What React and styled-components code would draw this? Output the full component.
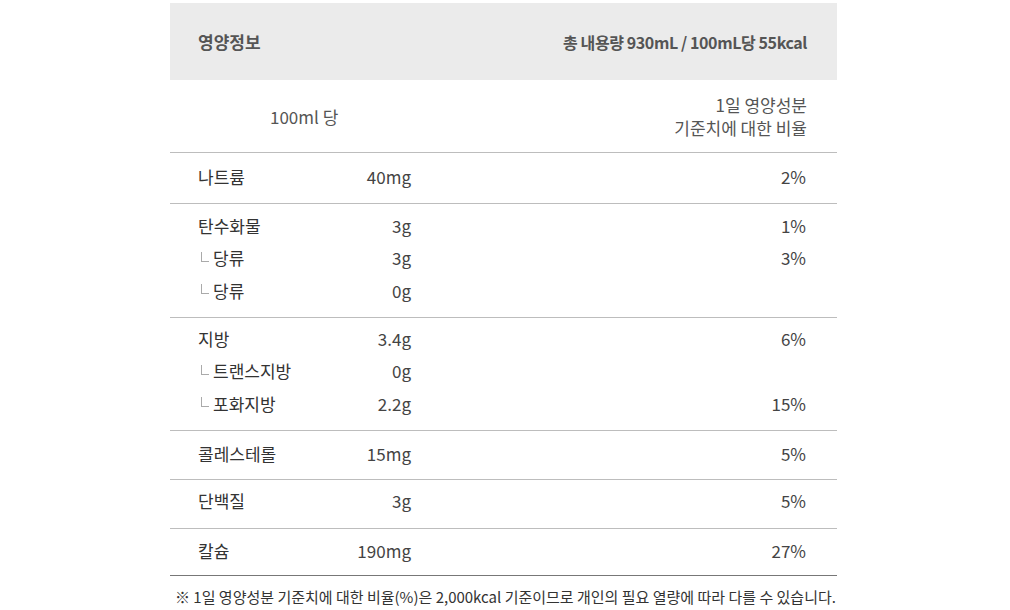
import React from "react";
import styled, { createGlobalStyle } from "styled-components";

const Global = createGlobalStyle`
  html, body { margin: 0; padding: 0; background: #fff; }
  body { font-family: "Noto Sans CJK KR", "Noto Sans", sans-serif; }
`;

const Page = styled.div`
  padding: 3px 0 0 170px;
`;

const Table = styled.div`
  width: 667px;
`;

const Head = styled.div`
  height: 77px;
  background: #ebebeb;
  display: flex;
  align-items: center;
  justify-content: space-between;
  padding: 0 30px 0 28px;
  box-sizing: border-box;
  font-weight: 700;
  color: #555;
`;

const HeadTitle = styled.span`
  font-size: 17px;
`;

const HeadInfo = styled.span`
  font-size: 16px;
  letter-spacing: -0.4px;
`;

const SubHead = styled.div`
  height: 73px;
  box-sizing: border-box;
  border-bottom: 1px solid #bdbdbd;
  display: flex;
  align-items: center;
  justify-content: space-between;
  padding: 0 30px 0 100px;
  font-size: 17px;
  color: #555;
  line-height: 23px;
`;

const SubRight = styled.div`
  text-align: right;
`;

const Group = styled.div`
  border-bottom: 1px solid ${(p) => (p.$last ? "#777" : "#bdbdbd")};
  padding: ${(p) => p.$pad};
`;

const Line = styled.div`
  display: grid;
  grid-template-columns: 130px 83px 1fr;
  padding: 0 31px 0 28px;
  height: 32.5px;
  align-items: center;
  font-size: 17px;
  color: #444;
`;

const Name = styled.div`
  display: flex;
  align-items: center;
  color: #333;
  white-space: nowrap;
`;

const Branch = styled.span`
  display: inline-block;
  width: 8px;
  height: 10px;
  margin: 0 4px 0 3px;
  border-left: 1px solid #aaa;
  border-bottom: 1px solid #aaa;
  box-sizing: border-box;
  transform: translateY(-1px);
`;

const Value = styled.div`
  text-align: right;
`;

const Pct = styled.div`
  text-align: right;
`;

const Note = styled.div`
  padding: 10px 0 0 5px;
  font-size: 15px;
  color: #333;
  white-space: nowrap;
`;

const groups = [
  { pad: "7px 0 10.5px", rows: [["나트륨", "40mg", "2%", false]] },
  {
    pad: "5px 0 10.5px",
    rows: [
      ["탄수화물", "3g", "1%", false],
      ["당류", "3g", "3%", true],
      ["당류", "0g", "", true],
    ],
  },
  {
    pad: "4px 0 10.5px",
    rows: [
      ["지방", "3.4g", "6%", false],
      ["트랜스지방", "0g", "", true],
      ["포화지방", "2.2g", "15%", true],
    ],
  },
  { pad: "6px 0 9.5px", rows: [["콜레스테롤", "15mg", "5%", false]] },
  { pad: "4px 0 11.5px", rows: [["단백질", "3g", "5%", false]] },
  { pad: "5px 0 8.5px", rows: [["칼슘", "190mg", "27%", false]], last: true },
];

export default function App() {
  return (
    <>
      <Global />
      <Page>
        <Table>
          <Head>
            <HeadTitle>영양정보</HeadTitle>
            <HeadInfo>총 내용량 930mL / 100mL당 55kcal</HeadInfo>
          </Head>
          <SubHead>
            <span>100ml 당</span>
            <SubRight>
              1일 영양성분
              <br />
              기준치에 대한 비율
            </SubRight>
          </SubHead>
          {groups.map((g, i) => (
            <Group key={i} $pad={g.pad} $last={g.last}>
              {g.rows.map(([n, v, p, sub], j) => (
                <Line key={j}>
                  <Name>
                    {sub && <Branch />}
                    {n}
                  </Name>
                  <Value>{v}</Value>
                  <Pct>{p}</Pct>
                </Line>
              ))}
            </Group>
          ))}
        </Table>
        <Note>
          ※ 1일 영양성분 기준치에 대한 비율(%)은 2,000kcal 기준이므로 개인의 필요 열량에 따라 다를 수 있습니다.
        </Note>
      </Page>
    </>
  );
}
